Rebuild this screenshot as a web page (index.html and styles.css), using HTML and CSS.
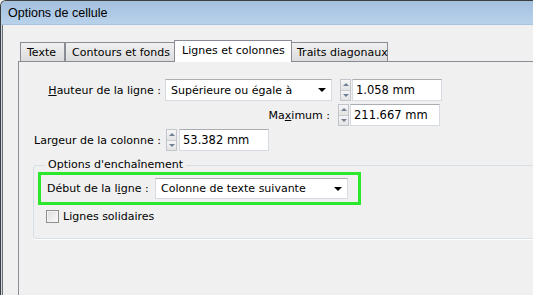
FILE: index.html
```
<!DOCTYPE html>
<html lang="fr">

<head>
  <meta charset="UTF-8">
  <title>Options de cellule</title>
  <link rel="stylesheet" href="styles.css">
</head>

<body>
  <div class="window">
    <div class="titlebar">Options de cellule</div>
    <div class="client">
      <div class="tabs">
        <div class="tab tab-texte">Texte</div>
        <div class="tab tab-contours">Contours et fonds</div>
        <div class="tab tab-lignes active">Lignes et colonnes</div>
        <div class="tab tab-traits">Traits diagonaux</div>
      </div>
      <div class="panel">
        <div class="row">
          <div class="label label-main"><u>H</u>auteur de la ligne :</div>
          <div class="select select-hauteur">
            <span>Supérieure ou égale à</span>
            <span class="arrow"></span>
          </div>
          <div class="spin spin-gap">
            <div class="half up"></div>
            <div class="half down"></div>
          </div>
          <div class="field">1.058 mm</div>
        </div>
        <div class="row">
          <div class="label label-max">Ma<u>x</u>imum :</div>
          <div class="spin spin-gap">
            <div class="half up"></div>
            <div class="half down"></div>
          </div>
          <div class="field">211.667 mm</div>
        </div>
        <div class="row">
          <div class="label label-main">Lar<u>g</u>eur de la colonne :</div>
          <div class="spin spin-small">
            <div class="half up"></div>
            <div class="half down"></div>
          </div>
          <div class="field field-small">53.382 mm</div>
        </div>

        <div class="group">
          <div class="legend">Options d'enchaînement</div>
          <div class="highlight">
            <div class="label label-debut">Début de la l<u>i</u>gne :</div>
            <div class="select select-debut">
              <span>Colonne de texte suivante</span>
              <span class="arrow"></span>
            </div>
          </div>
          <div class="check">
            <span class="box"></span>
            <span>Lignes solidaires</span>
          </div>
        </div>
      </div>
    </div>
  </div>
</body>

</html>
```

FILE: styles.css
```
body {
  margin: 0;
  background: #f0f0f0;
  font-family: "DejaVu Sans", Tahoma, sans-serif;
  font-size: 11px;
  color: #000;
}

.window {
  width: 533px;
  height: 295px;
  overflow: hidden;
  border-left: 1px solid #3d3d3d;
  border-top: 1px solid #3d3d3d;
  border-top-left-radius: 6px;
  box-sizing: border-box;
  background: #f0f0f0;
}

.titlebar {
  height: 24px;
  line-height: 24px;
  padding-left: 7px;
  font-family: "Liberation Sans", Arial, sans-serif;
  font-size: 12.5px;
  background: linear-gradient(#a3c0df, #b9d2eb);
  border-bottom: 1px solid #a8c3de;
  box-sizing: border-box;
}

.client {
  height: 270px;
  padding-top: 15px;
  box-shadow: inset 1px 0 0 #c9d9eb, inset 2px 0 0 #6e6e6e;
}

/* tabs */
.tabs {
  display: flex;
  align-items: flex-end;
  height: 21px;
  margin-left: 19px;
  position: relative;
  z-index: 1;
}

.tab {
  height: 19px;
  line-height: 19px;
  padding-left: 6px;
  box-sizing: border-box;
  border: 1px solid #898c95;
  border-bottom: none;
  background: linear-gradient(#f0f0f0, #dcdcdc);
  white-space: nowrap;
}

.tab-texte {
  width: 45px;
}

.tab-contours {
  width: 110px;
}

.tab-lignes {
  width: 118px;
  margin-left: -1px;
}

.tab-traits {
  width: 97px;
  margin-left: -1px;
  padding-left: 5px;
}

.tab.active {
  height: 22px;
  line-height: 20px;
  margin-bottom: -1px;
  padding-left: 7px;
  background: #fff;
}

.panel {
  margin-left: 17px;
  height: 240px;
  border-left: 1px solid #898c95;
  border-top: 1px solid #898c95;
  padding-top: 17px;
  box-sizing: border-box;
}

/* rows */
.row {
  display: flex;
  align-items: center;
  height: 22px;
  margin-bottom: 3px;
}

.label {
  white-space: nowrap;
}

.label-main {
  width: 142px;
  text-align: right;
}

.label-max {
  width: 311px;
  text-align: right;
}

.select {
  height: 22px;
  display: flex;
  align-items: center;
  justify-content: space-between;
  padding: 0 5px;
  box-sizing: border-box;
  background: #fff;
  border: 1px solid #d6dbe2;
  border-top-color: #abadb3;
}

.select-hauteur {
  width: 167px;
  margin-left: 4px;
}

.arrow {
  width: 0;
  height: 0;
  border-left: 4px solid transparent;
  border-right: 4px solid transparent;
  border-top: 4px solid #000;
}

.spin {
  width: 11px;
  height: 22px;
  display: flex;
  flex-direction: column;
  box-sizing: border-box;
  border: 1px solid #c2c6cc;
  background: #fafafa;
}

.spin-gap {
  margin-left: 8px;
}

.spin-small {
  margin-left: 5px;
}

.half {
  flex: 1;
  display: flex;
  align-items: center;
  justify-content: center;
  background: linear-gradient(#f6f6f6, #e3e3e3);
}

.half + .half {
  border-top: 1px solid #c8ccd2;
}

.half::after {
  content: "";
  border-left: 3px solid transparent;
  border-right: 3px solid transparent;
}

.up::after {
  border-bottom: 3px solid #6f7f96;
}

.down::after {
  border-top: 3px solid #6f7f96;
}

.field {
  width: 90px;
  height: 22px;
  line-height: 20px;
  margin-left: 1px;
  padding-left: 3px;
  box-sizing: border-box;
  background: #fff;
  border: 1px solid #d6dbe2;
  border-top-color: #abadb3;
  font-size: 11.5px;
}

.field-small {
  margin-left: 2px;
}

/* group box */
.group {
  margin-top: 14px;
  margin-left: 14px;
  width: 600px;
  height: 74px;
  box-sizing: border-box;
  border: 1px solid #d5dfe5;
  border-radius: 3px;
  box-shadow: 0 1px 0 #fff;
}

.legend {
  width: fit-content;
  margin: -9px 0 0 11px;
  padding: 0 3px;
  line-height: 15px;
  background: #f0f0f0;
}

.highlight {
  width: 323px;
  height: 33px;
  margin-left: 4px;
  border: 3px solid #2ce82c;
  box-sizing: border-box;
  display: flex;
  align-items: center;
}

.label-debut {
  width: 114px;
  padding-left: 6px;
  box-sizing: border-box;
}

.select-debut {
  width: 193px;
  height: 21px;
}

.check {
  display: flex;
  align-items: center;
  margin-top: 4px;
  margin-left: 12px;
  height: 14px;
}

.box {
  width: 13px;
  height: 13px;
  box-sizing: border-box;
  border: 1px solid #8f8f8f;
  background: linear-gradient(135deg, #dcdcdc, #fbfbfb);
  box-shadow: inset 0 0 0 1px #f4f4f4;
  margin-right: 4px;
}
```
